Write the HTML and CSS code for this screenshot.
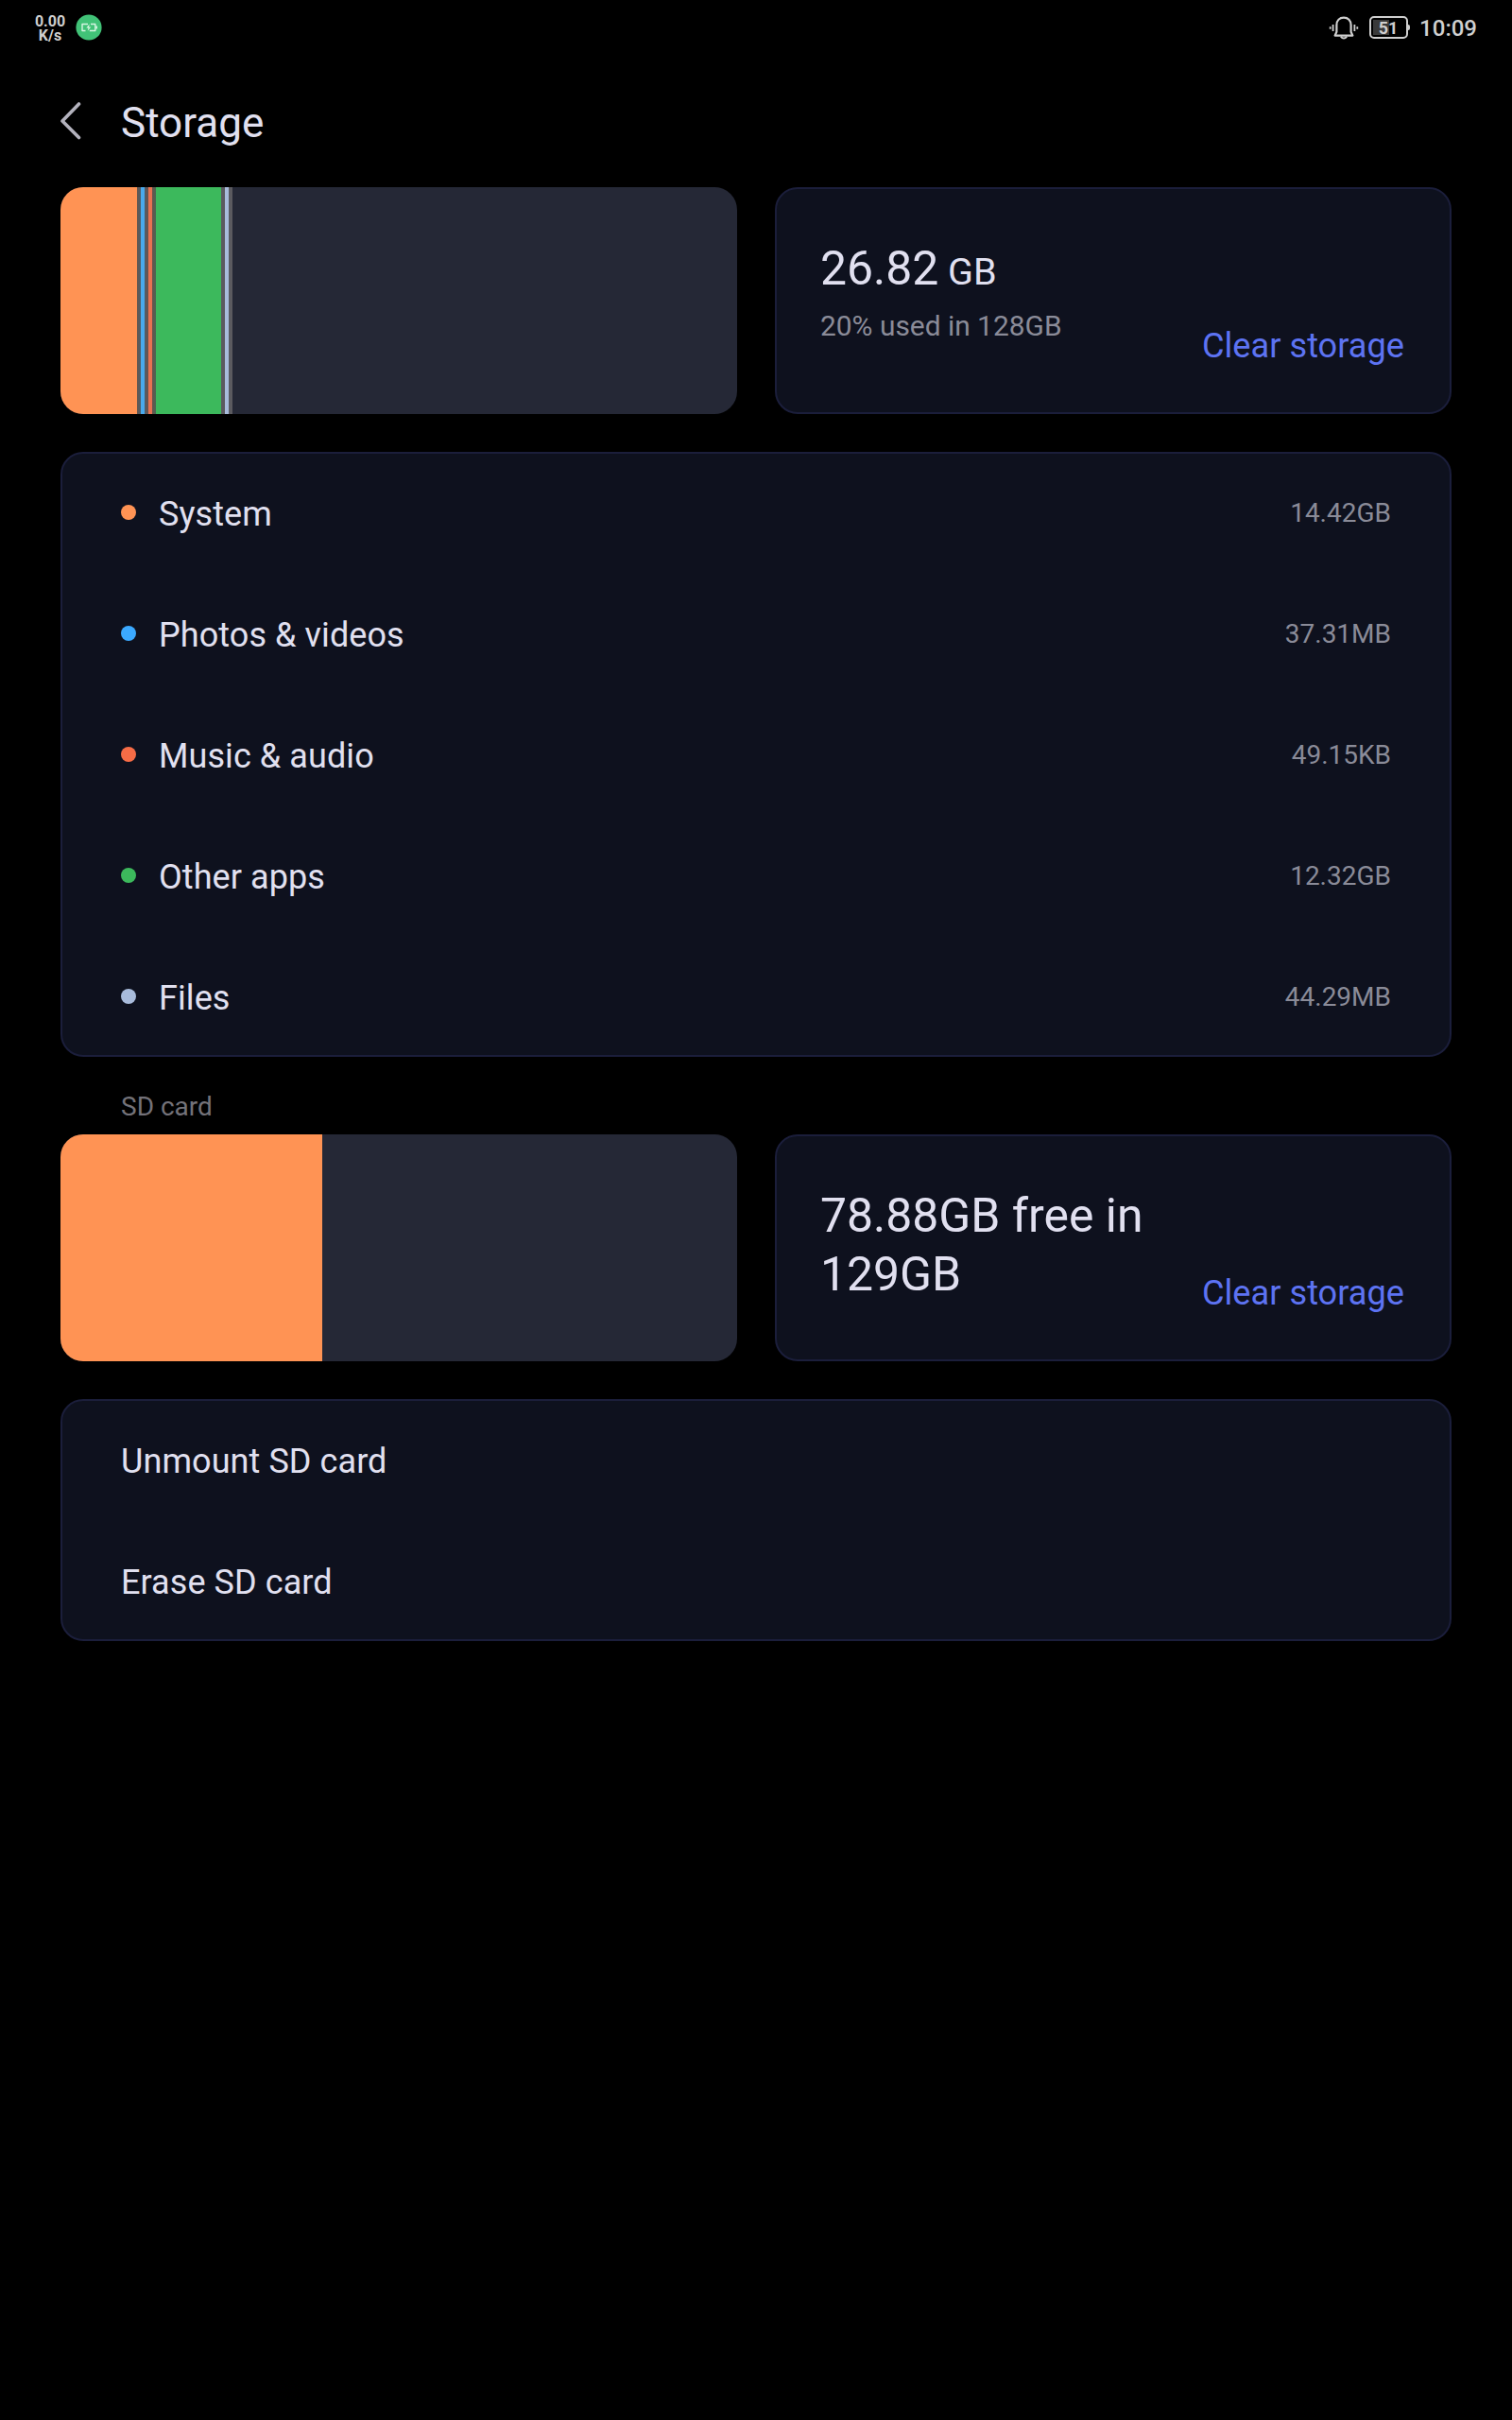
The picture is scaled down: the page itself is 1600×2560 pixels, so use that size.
FILE: index.html
```html
<!DOCTYPE html>
<html lang="en">
<head>
<meta charset="utf-8">
<title>Storage</title>
<link rel="stylesheet" href="styles.css">
</head>
<body>
<div class="status-bar">
  <div class="status-left">
    <div class="net-speed"><span>0.00</span><span>K/s</span></div>
    <svg class="charge-badge" width="28" height="28" viewBox="0 0 28 28" fill="none">
      <circle cx="14" cy="14" r="13.6" fill="#41c277"/>
      <path d="M13 10.500H7V17.500H10.500M16 10.500H20.800V17.500H14.800" stroke="#d8f5e3" stroke-width="1.400" stroke-linejoin="round"/>
      <path d="M22.200 12.400V15.600" stroke="#d8f5e3" stroke-width="1.600"/>
      <path d="M14.800 10.300L11.300 14.600H13.500L12.700 17.700L16.300 13.500H14Z" fill="#d8f5e3"/>
    </svg>
  </div>
  <div class="status-right">
    <svg class="bell" width="32" height="28" viewBox="0 0 32 28" fill="none" stroke="#cfcfcf">
      <path d="M6.600 22.600H25.400L23.600 18.800V11.500C23.600 6.500 20.500 3.600 16 3.600S8.400 6.500 8.400 11.500V18.800Z" stroke-width="2.200" stroke-linejoin="round"/>
      <path d="M12.800 23.600Q16 27.400 19.200 23.600" stroke-width="2"/>
      <path d="M4.600 11V18M27.400 11V18M1.700 13.200V15.800M30.300 13.200V15.800" stroke-width="1.800"/>
    </svg>
    <div class="battery"><span class="battery-level">51</span></div>
    <span class="clock">10:09</span>
  </div>
</div>

<header class="header">
  <svg class="back" width="24" height="42" viewBox="0 0 24 42" fill="none" stroke="#b3b2bd" stroke-width="3.600" stroke-linecap="round" stroke-linejoin="round">
    <path d="M19.500 3L2 21L19.500 38.500"/>
  </svg>
  <h1 class="title">Storage</h1>
</header>

<main class="content">
  <section class="summary">
    <div class="usage-bar">
      <span class="seg system" style="width:81px"></span>
      <span class="seg gap gap-a"></span>
      <span class="seg photos" style="width:4px"></span>
      <span class="seg gap gap-b"></span>
      <span class="seg music" style="width:4px"></span>
      <span class="seg gap gap-c"></span>
      <span class="seg apps" style="width:69px"></span>
      <span class="seg gap"></span>
      <span class="seg files" style="width:4px"></span>
      <span class="seg gap"></span>
    </div>
    <div class="card info">
      <div class="info-text">
        <div class="amount">26.82<span class="unit"> GB</span></div>
        <div class="used">20% used in 128GB</div>
      </div>
      <a class="clear">Clear storage</a>
    </div>
  </section>

  <ul class="card list">
    <li class="row"><i class="dot system"></i><span class="name">System</span><span class="value">14.42GB</span></li>
    <li class="row"><i class="dot photos-dot"></i><span class="name">Photos &amp; videos</span><span class="value">37.31MB</span></li>
    <li class="row"><i class="dot music-dot"></i><span class="name">Music &amp; audio</span><span class="value">49.15KB</span></li>
    <li class="row"><i class="dot apps"></i><span class="name">Other apps</span><span class="value">12.32GB</span></li>
    <li class="row"><i class="dot files"></i><span class="name">Files</span><span class="value">44.29MB</span></li>
  </ul>

  <h2 class="section-label">SD card</h2>

  <section class="summary">
    <div class="usage-bar">
      <span class="seg system" style="width:277px"></span>
    </div>
    <div class="card info">
      <div class="info-text">
        <div class="amount">78.88GB free in 129GB</div>
      </div>
      <a class="clear">Clear storage</a>
    </div>
  </section>

  <ul class="card list">
    <li class="row"><span class="name">Unmount SD card</span></li>
    <li class="row"><span class="name">Erase SD card</span></li>
  </ul>
</main>
</body>
</html>
```

FILE: styles.css
```css
* {
  box-sizing: border-box;
}

body {
  margin: 0;
  min-height: 2560px;
  background: #000;
  color: #e1e0f0;
  font-family: Roboto, "Liberation Sans", sans-serif;
}

.status-bar {
  display: flex;
  justify-content: space-between;
  align-items: center;
  height: 60px;
  padding: 0 37px;
  color: #cfcfcf;
}

.status-left,
.status-right {
  display: flex;
  align-items: center;
}

.status-left {
  gap: 11px;
}

.net-speed {
  display: flex;
  flex-direction: column;
  align-items: center;
  width: 32px;
  margin-top: -1px;
  font-size: 16px;
  font-weight: 700;
  line-height: 15px;
}

.charge-badge {
  margin-top: -2px;
}

.bell {
  margin-top: -2px;
  margin-right: 11px;
}

.battery {
  position: relative;
  display: flex;
  align-items: center;
  justify-content: center;
  width: 41px;
  height: 24px;
  margin-top: -2px;
  margin-right: 12px;
  padding-right: 1px;
  border: 2px solid #cfcfcf;
  border-radius: 5px;
  background: linear-gradient(#393939, #393939) 2px 2px / 17px 16px no-repeat;
}

.battery::after {
  content: "";
  position: absolute;
  right: -4px;
  top: 7px;
  width: 2px;
  height: 6px;
  border-radius: 0 2px 2px 0;
  background: #cfcfcf;
}

.battery-level {
  margin-top: 1px;
  font-size: 18px;
  font-weight: 700;
  line-height: 20px;
}

.clock {
  margin-top: -1px;
  font-size: 24px;
  font-weight: 500;
  line-height: 28px;
}

.header {
  display: flex;
  align-items: center;
  height: 138px;
  padding: 0 64px;
}

.back {
  margin-top: -2px;
}

.title {
  margin: 1px 0 0 40px;
  font-size: 44px;
  font-weight: 400;
  line-height: 52px;
}

.content {
  padding: 0 64px;
}

.summary {
  display: grid;
  grid-template-columns: 1fr 1fr;
  gap: 40px;
  height: 240px;
  margin-bottom: 40px;
}

.usage-bar {
  display: flex;
  overflow: hidden;
  border-radius: 24px;
  background: #252836;
}

.gap {
  width: 4px;
  background: #5b5a5f;
}

.gap-a { background: linear-gradient(90deg, #66564e, #4d5e6a); }
.gap-b { background: linear-gradient(90deg, #505d68, #68534f); }
.gap-c { background: linear-gradient(90deg, #68534f, #4c6552); }

.system { background: #ff9354; }
.photos { background: #49a9ec; }
.music { background: #e87251; }
.apps { background: #3cb95c; }
.files { background: #a8bbdb; }
.photos-dot { background: #3ba9ff; }
.music-dot { background: #f66c46; }

.card {
  border: 2px solid #1b1e3b;
  border-radius: 24px;
  background: #0e111e;
}

.info {
  display: flex;
  justify-content: space-between;
  padding: 53px 48px 0 46px;
}

.info-text {
  width: 370px;
}

.amount {
  font-size: 49.9px;
  line-height: 62px;
}

.unit {
  font-size: 39.5px;
}

.used {
  margin-top: 8px;
  color: #8a8b98;
  font-size: 29.900px;
  line-height: 36px;
}

.clear {
  margin-top: 91px;
  color: #5d73f2;
  font-size: 36.200px;
  line-height: 44px;
  white-space: nowrap;
}

.list {
  margin: 0;
  padding: 0 62px;
  list-style: none;
}

.row {
  display: flex;
  align-items: center;
  height: 128px;
}

.row:first-child {
  margin-top: -2px;
}

.row:last-child {
  margin-bottom: -2px;
}

.dot {
  width: 16px;
  height: 16px;
  margin-right: 24px;
  border-radius: 50%;
}

.name {
  padding-top: 4px;
  font-size: 36px;
  letter-spacing: 0.08px;
  line-height: 42px;
}

.value {
  margin-left: auto;
  padding-top: 2px;
  color: #8a8b98;
  font-size: 28px;
  line-height: 34px;
}

.section-label {
  height: 82px;
  margin: 0;
  padding: 35px 64px 0;
  color: #737279;
  font-size: 28px;
  font-weight: 400;
  line-height: 36px;
}
```
